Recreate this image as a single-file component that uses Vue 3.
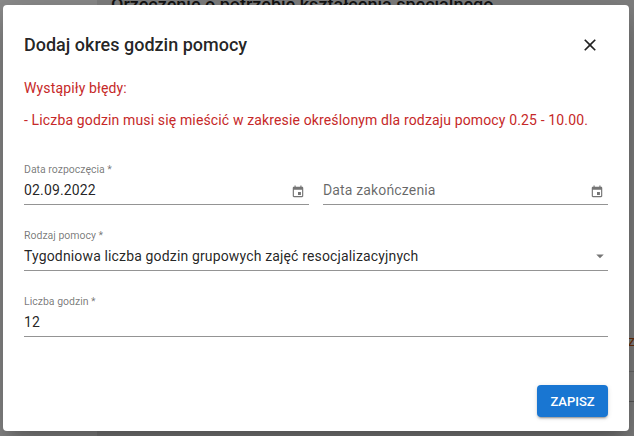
<script setup>
const calPath = 'M17 12h-5v5h5v-5zM16 1v2H8V1H6v2H5c-1.11 0-1.99.9-1.99 2L3 19c0 1.1.89 2 2 2h14c1.1 0 2-.9 2-2V5c0-1.1-.9-2-2-2h-1V1h-2zm3 18H5V8h14v11z'
</script>

<template>
  <div class="page">
    <div class="backdrop">
      <div class="side"></div>
      <div class="content">
        <div class="heading">Orzeczenie o potrzebie kształcenia specjalnego</div>
        <div class="edge-text">zi</div>
        <div class="edge-line first"></div>
        <div class="edge-line second"></div>
      </div>
    </div>
    <div class="dialog">
      <header class="head">
        <h2 class="title">Dodaj okres godzin pomocy</h2>
        <svg class="close" viewBox="0 0 24 24" aria-label="Zamknij">
          <path d="M19 6.41 17.59 5 12 10.59 6.41 5 5 6.41 10.59 12 5 17.59 6.41 19 12 13.41 17.59 19 19 17.59 13.41 12z" />
        </svg>
      </header>
      <div class="errors">
        <p>Wystąpiły błędy:</p>
        <p>- Liczba godzin musi się mieścić w zakresie określonym dla rodzaju pomocy 0.25 - 10.00.</p>
      </div>
      <div class="form">
        <div class="row">
          <div class="field">
            <label class="label">Data rozpoczęcia *</label>
            <div class="control">
              <span class="value">02.09.2022</span>
              <svg class="icon" viewBox="0 0 24 24"><path :d="calPath" /></svg>
            </div>
          </div>
          <div class="field">
            <label class="label blank"></label>
            <div class="control">
              <span class="value placeholder">Data zakończenia</span>
              <svg class="icon" viewBox="0 0 24 24"><path :d="calPath" /></svg>
            </div>
          </div>
        </div>
        <div class="field">
          <label class="label">Rodzaj pomocy *</label>
          <div class="control">
            <span class="value">Tygodniowa liczba godzin grupowych zajęć resocjalizacyjnych</span>
            <svg class="caret" viewBox="0 0 24 24"><path d="M7 10l5 5 5-5z" /></svg>
          </div>
        </div>
        <div class="field">
          <label class="label">Liczba godzin *</label>
          <div class="control">
            <span class="value">12</span>
          </div>
        </div>
      </div>
      <footer class="foot">
        <button class="save" type="button">ZAPISZ</button>
      </footer>
    </div>
  </div>
</template>

<style>
html, body { margin: 0; overflow: hidden; }
</style>

<style scoped>
.page {
  position: relative;
  width: 634px;
  height: 436px;
  overflow: hidden;
  font-family: Roboto, "Noto Sans", sans-serif;
  background: #7f7f7f;
}
.backdrop {
  position: absolute;
  inset: 0;
  display: flex;
}
.side { width: 97px; background: #8c8c8c; }
.content { flex: 1; position: relative; background: #808080; }
.heading {
  position: absolute;
  left: 14px;
  top: -7px;
  white-space: nowrap;
  font-size: 18px;
  font-weight: 500;
  line-height: 24px;
  color: #141414;
}
.edge-text {
  position: absolute;
  left: 531px;
  top: 332px;
  font-size: 14px;
  line-height: 18px;
  color: #6b2f0a;
}
.edge-line { position: absolute; left: 530px; right: 0; height: 1px; background: #6a6a6a; }
.edge-line.first { top: 371px; }
.edge-line.second { top: 401px; background: #5a5a5a; }
.dialog {
  position: absolute;
  left: 3px;
  top: 5px;
  width: 626px;
  height: 426px;
  box-sizing: border-box;
  padding: 0 21px;
  background: #fff;
  border-radius: 4px;
  box-shadow: 0 11px 15px -7px rgba(0,0,0,.2), 0 24px 38px 3px rgba(0,0,0,.14), 0 9px 46px 8px rgba(0,0,0,.12);
  display: flex;
  flex-direction: column;
}
.head {
  display: flex;
  justify-content: space-between;
  align-items: center;
  height: 40px;
  margin-top: 20px;
}
.title {
  margin: 0;
  font-size: 18px;
  font-weight: 500;
  line-height: 40px;
  color: rgba(0,0,0,.87);
}
.close { width: 20px; height: 20px; margin-right: 8px; fill: rgba(0,0,0,.87); }
.errors {
  margin-top: 13px;
  color: #c62828;
  font-size: 14px;
  letter-spacing: .14px;
  line-height: 20px;
}
.errors p { margin: 0 0 12px; }
.form { display: flex; flex-direction: column; gap: 24px; margin-top: 21px; }
.row { display: flex; gap: 14px; }
.row .field { flex: 1; }
.label {
  display: block;
  height: 14px;
  font-size: 10.5px;
  line-height: 14px;
  color: rgba(0,0,0,.54);
}
.control {
  display: flex;
  align-items: center;
  justify-content: space-between;
  height: 28px;
  padding-bottom: 2px;
  box-sizing: border-box;
  border-bottom: 1px solid rgba(0,0,0,.42);
}
.value {
  font-size: 14px;
  letter-spacing: .15px;
  color: rgba(0,0,0,.87);
}
.placeholder { color: rgba(0,0,0,.6); }
.icon { width: 14px; height: 14px; margin: 4px 4px 0 0; fill: rgba(0,0,0,.54); flex: none; }
.caret { width: 18px; height: 18px; margin-right: -1px; fill: rgba(0,0,0,.54); flex: none; }
.foot { margin-top: auto; display: flex; justify-content: flex-end; padding-bottom: 14px; }
.save {
  width: 71px;
  height: 32px;
  border: none;
  border-radius: 4px;
  background: #1976d2;
  color: #fff;
  font-family: inherit;
  font-size: 13px;
  font-weight: 500;
  box-shadow: 0 3px 1px -2px rgba(0,0,0,.2), 0 2px 2px 0 rgba(0,0,0,.14), 0 1px 5px 0 rgba(0,0,0,.12);
}
</style>
